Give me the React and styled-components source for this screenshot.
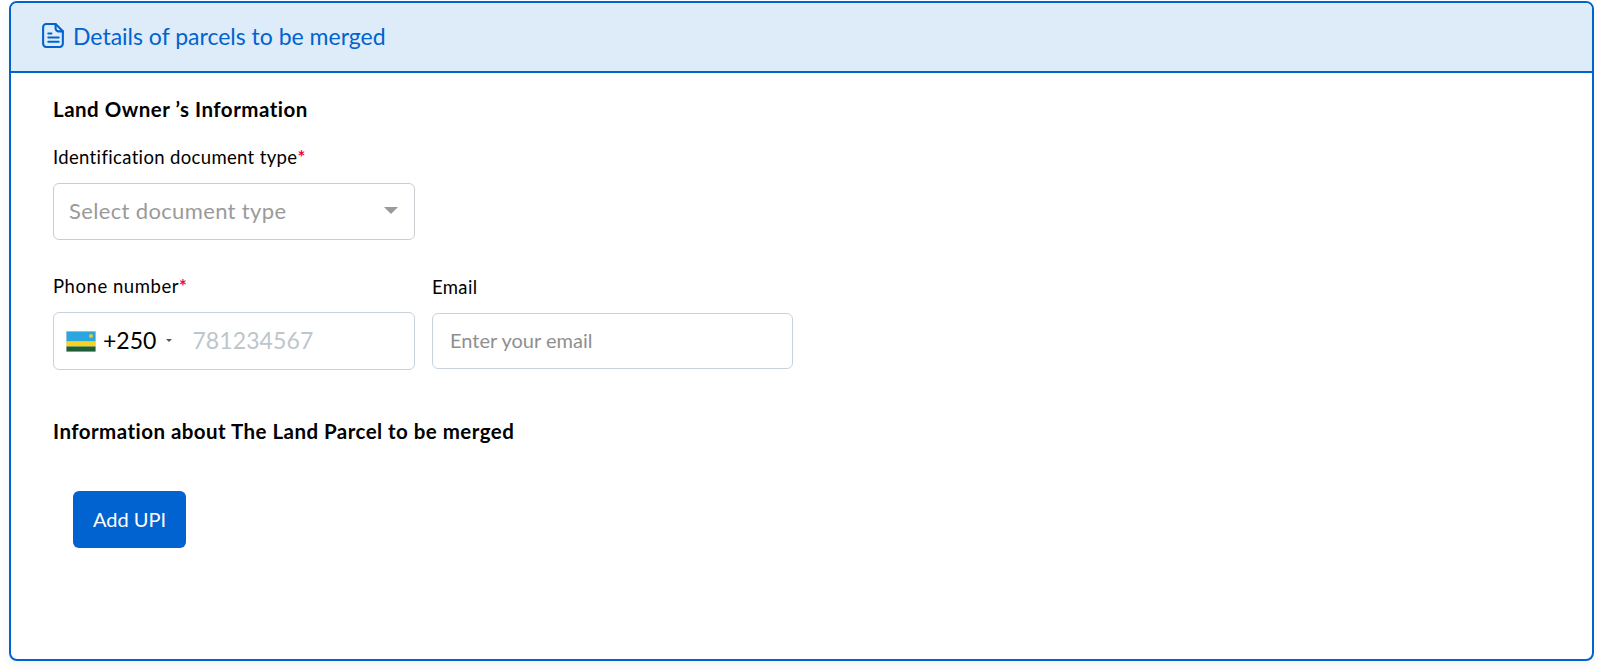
import React from 'react'
import styled, { createGlobalStyle } from 'styled-components'

const GlobalStyle = createGlobalStyle`
  html, body {
    margin: 0;
    padding: 0;
    background: #fff;
    font-family: "Lato", "Open Sans", sans-serif;
    color: #000;
  }
`

const Page = styled.div`
  width: 1600px;
  height: 670px;
  padding: 1px 6px 0 9px;
  box-sizing: border-box;
  overflow: hidden;
`

const Card = styled.section`
  height: 660px;
  box-sizing: border-box;
  border: 2px solid #0063cf;
  border-radius: 8px;
  box-shadow: 0 4px 10px rgba(0, 0, 0, 0.05);
  overflow: hidden;
`

const CardHeader = styled.header`
  height: 70px;
  box-sizing: border-box;
  display: flex;
  align-items: center;
  gap: 7px;
  padding: 0 0 3px 30px;
  background: #deebf8;
  border-bottom: 2px solid #0063cf;
  color: #0063cf;
  font-size: 23px;
`

const CardBody = styled.div`
  padding: 24px 42px 0;
`

const SectionTitle = styled.h3`
  margin: 0;
  font-size: 20.5px;
  line-height: 24px;
  font-weight: 700;
  letter-spacing: ${p => p.$spacing || 0.5}px;
`

const Label = styled.label`
  display: block;
  font-size: 18.5px;
  line-height: 22px;
  letter-spacing: ${p => p.$spacing || 0.35}px;
`

const Required = styled.span`
  color: #f5004f;
  font-weight: 700;
`

const Field = styled.div`
  width: ${p => p.$width}px;
  padding-top: ${p => p.$top || 0}px;
`

const Select = styled.div`
  margin-top: 15px;
  height: 57px;
  box-sizing: border-box;
  display: flex;
  align-items: center;
  justify-content: space-between;
  padding: 0 16px 2px 15px;
  border: 1px solid #c9cdd2;
  border-radius: 6px;
  color: #9a9a9a;
  font-size: 22px;
  letter-spacing: 0.35px;
`

const Caret = styled.span`
  width: 0;
  height: 0;
  border-left: ${p => p.$size}px solid transparent;
  border-right: ${p => p.$size}px solid transparent;
  border-top: ${p => p.$size}px solid ${p => p.$color};
`

const Row = styled.div`
  display: flex;
  gap: 17px;
  margin-top: 35px;
`

const PhoneBox = styled.div`
  margin-top: 15px;
  height: 58px;
  box-sizing: border-box;
  display: flex;
  align-items: center;
  padding: 0 0 2px 12px;
  border: 1px solid #c9d2dc;
  border-radius: 6px;
`

const Flag = styled.svg`
  width: 30px;
  height: 21px;
  margin-top: 2px;
  flex: none;
`

const DialCode = styled.span`
  margin-left: 7px;
  font-size: 23px;
`

const PhoneCaret = styled.span`
  margin: 0 20px 0 10px;
  display: flex;
`

const PhonePlaceholder = styled.span`
  color: #bcc6cc;
  font-size: 23px;
  letter-spacing: 0.1px;
`

const EmailBox = styled.div`
  margin-top: 15px;
  height: 56px;
  box-sizing: border-box;
  display: flex;
  align-items: center;
  padding: 0 0 2px 17px;
  border: 1px solid #c9d2dc;
  border-radius: 6px;
  color: #8f8f8f;
  font-size: 20px;
`

const ParcelTitle = styled(SectionTitle)`
  margin-top: 49px;
`

const AddButton = styled.button`
  display: block;
  margin: 48px 0 0 20px;
  width: 113px;
  height: 57px;
  padding: 0 0 2px;
  border: 0;
  border-radius: 6px;
  background: #0063cf;
  color: #fff;
  font-family: inherit;
  font-size: 20px;
`

const DocIcon = () => (
  <svg width="25" height="27" viewBox="0 0 24 26" fill="none" stroke="#0063cf" strokeWidth="2" strokeLinecap="round" strokeLinejoin="round">
    <path d="M14 2H5a3 3 0 0 0-3 3v16a3 3 0 0 0 3 3h13a3 3 0 0 0 3-3V9z" />
    <path d="M14 2v4a3 3 0 0 0 3 3h4" />
    <path d="M7 11h3M7 15h10M7 19h10" />
  </svg>
)

const App = () => (
  <Page>
    <GlobalStyle />
    <Card>
      <CardHeader>
        <DocIcon />
        Details of parcels to be merged
      </CardHeader>
      <CardBody>
        <SectionTitle>Land Owner ’s Information</SectionTitle>
        <Field $width={362} $top={25}>
          <Label>Identification document type<Required>*</Required></Label>
          <Select>
            Select document type
            <Caret $size={7} $color="#9a9a9a" />
          </Select>
        </Field>
        <Row>
          <Field $width={362}>
            <Label $spacing={0.55}>Phone number<Required>*</Required></Label>
            <PhoneBox>
              <Flag viewBox="0 0 30 21">
                <rect width="30" height="21" fill="#dfe3e6" />
                <rect x="0.5" y="0.5" width="29" height="10" fill="#2ba6de" />
                <rect x="0.5" y="10.5" width="29" height="5" fill="#f5d320" />
                <rect x="0.5" y="15.5" width="29" height="5" fill="#1f5f37" />
                <circle cx="25" cy="5" r="2" fill="#e5c926" />
              </Flag>
              <DialCode>+250</DialCode>
              <PhoneCaret><Caret $size={3.5} $color="#555" /></PhoneCaret>
              <PhonePlaceholder>781234567</PhonePlaceholder>
            </PhoneBox>
          </Field>
          <Field $width={361} $top={1}>
            <Label>Email</Label>
            <EmailBox>Enter your email</EmailBox>
          </Field>
        </Row>
        <ParcelTitle $spacing={0.46}>Information about The Land Parcel to be merged</ParcelTitle>
        <AddButton>Add UPI</AddButton>
      </CardBody>
    </Card>
  </Page>
)

export default App
